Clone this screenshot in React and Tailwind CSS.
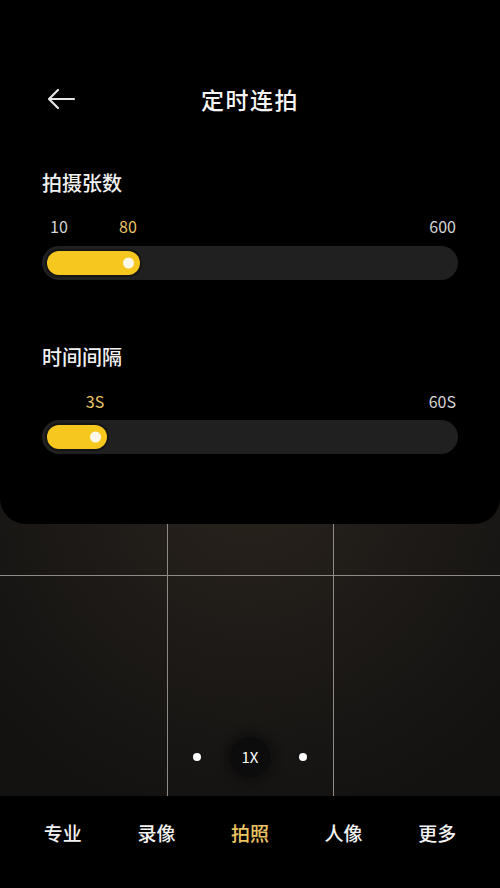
import React from 'react';

const font = { fontFamily: '"Noto Sans CJK SC", "Noto Sans", sans-serif' };

const BackArrow = () => (
  <svg width="30" height="22" viewBox="0 0 30 22" fill="none">
    <path d="M28 11H3M12 2L3 11l9 9" stroke="#e6e6e6" strokeWidth="2.2" strokeLinecap="round" strokeLinejoin="round" />
  </svg>
);

const Slider = ({ title, min, max, value, fill, labelX, gapTop = 19, gapTrack = 10 }) => (
  <div>
    <div className="text-[20px] leading-[28px] font-medium text-[#f2f2f2]">{title}</div>
    <div
      className="relative h-[20px] text-[16px] leading-[20px] text-[#d6d6d6]"
      style={{ marginTop: gapTop }}
    >
      {min && <span className="absolute left-[8px] top-0">{min}</span>}
      <span
        className="absolute top-0 -translate-x-1/2 text-[#ebc463]"
        style={{ left: labelX }}
      >
        {value}
      </span>
      <span className="absolute right-[2px] top-0">{max}</span>
    </div>
    <div className="h-[34px] rounded-full bg-[#202020] p-[5px]" style={{ marginTop: gapTrack }}>
      <div
        className="relative h-[24px] rounded-full bg-[#f6c71e] shadow-[0_0_0_2px_#151515]"
        style={{ width: fill }}
      >
        <span className="absolute right-[6px] top-1/2 h-[11px] w-[11px] -translate-y-1/2 rounded-full bg-[#fbf8ea]" />
      </div>
    </div>
  </div>
);

const modes = ['专业', '录像', '拍照', '人像', '更多'];

export default function App() {
  return (
    <div className="flex h-[888px] w-[500px] flex-col overflow-hidden bg-black" style={font}>
      <div className="flex flex-1 flex-col bg-[radial-gradient(ellipse_70%_45%_at_50%_60%,#2a231d_0%,#1c1916_55%,#131211_100%)]">
        {/* settings panel */}
        <div className="h-[524px] rounded-b-[26px] bg-black px-[42px]">
          <div className="mt-[75px] grid h-[48px] grid-cols-[1fr_auto_1fr] items-center">
            <div className="pl-[4px]">
              <BackArrow />
            </div>
            <div className="text-[23px] font-medium tracking-[1.5px] text-[#f5f5f5]">定时连拍</div>
            <div />
          </div>

          <div className="mt-[46px]">
            <Slider title="拍摄张数" min="10" max="600" value="80" fill={93} labelX={86} />
          </div>
          <div className="mt-[63px]">
            <Slider title="时间间隔" max="60S" value="3S" fill={60} labelX={53} gapTop={20} gapTrack={9} />
          </div>
        </div>

        {/* viewfinder grid */}
        <div className="relative flex-1">
          <div className="grid h-full grid-cols-[168px_166px_166px] grid-rows-[52px_1fr]">
            <div className="border-b border-r border-[#8f8a85]" />
            <div className="border-b border-r border-[#8f8a85]" />
            <div className="border-b border-[#8f8a85]" />
            <div className="border-r border-[#8f8a85]" />
            <div className="border-r border-[#8f8a85]" />
            <div />
          </div>
          <div className="absolute bottom-[19px] left-0 right-0 flex items-center justify-center gap-[29px]">
            <span className="h-[8px] w-[8px] rounded-full bg-white" />
            <span className="flex h-[40px] w-[40px] items-center justify-center rounded-full bg-[#0c0c0c] text-[15px] text-white shadow-[0_0_8px_4px_rgba(10,10,10,0.6)]">
              1X
            </span>
            <span className="h-[8px] w-[8px] rounded-full bg-white" />
          </div>
        </div>
      </div>

      {/* mode bar */}
      <div className="grid h-[92px] grid-cols-5 px-[16px] pt-[24px]">
        {modes.map((m) => (
          <div
            key={m}
            className={`text-center text-[19px] font-medium leading-[26px] ${m === '拍照' ? 'text-[#ebc463]' : 'text-[#f2f2f2]'}`}
          >
            {m}
          </div>
        ))}
      </div>
    </div>
  );
}
